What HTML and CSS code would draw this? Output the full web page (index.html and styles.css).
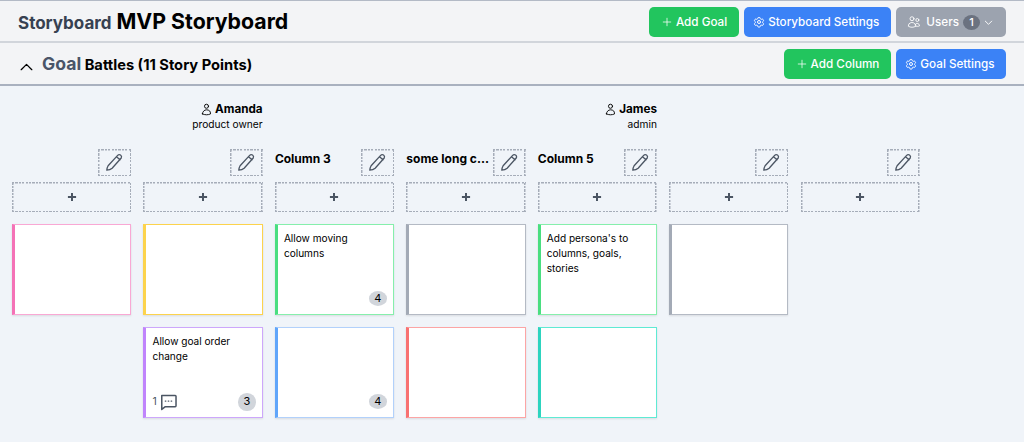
FILE: index.html
```html
<!DOCTYPE html>
<html lang="en">
<head>
    <meta charset="UTF-8">
    <meta name="viewport" content="width=device-width, initial-scale=1.0">
    <title>MVP Storyboard</title>
    <link rel="stylesheet" href="styles.css">
</head>
<body>
    <svg class="icon-sprite" width="0" height="0">
        <symbol id="i-plus" viewBox="0 0 24 24"><path d="M12 4.5v15m7.5-7.5h-15" fill="none" stroke="currentColor" stroke-width="1.5" stroke-linecap="round"/></symbol>
        <symbol id="i-cog" viewBox="0 0 24 24"><path d="M9.6 3.9c.1-.5.6-.9 1.1-.9h2.6c.5 0 1 .4 1.1.9l.2 1.4c.1.4.4.7.7.9l.6.3c.4.2.8.2 1.1.1l1.3-.5c.5-.2 1.1 0 1.4.5l1.3 2.2c.3.5.2 1.1-.3 1.4l-1.1.9c-.3.2-.4.6-.4 1v.8c0 .4.1.7.4 1l1.1.9c.5.3.6.9.3 1.4l-1.3 2.2c-.3.5-.9.7-1.4.5l-1.3-.5c-.3-.1-.7-.1-1.1.1l-.6.3c-.3.2-.6.5-.7.9l-.2 1.4c-.1.5-.6.9-1.1.9h-2.6c-.5 0-1-.4-1.1-.9l-.2-1.4c-.1-.4-.4-.7-.7-.9l-.6-.3c-.4-.2-.8-.2-1.1-.1l-1.3.5c-.5.2-1.1 0-1.4-.5l-1.3-2.2c-.3-.5-.2-1.1.3-1.4l1.1-.9c.3-.3.4-.6.4-1v-.8c0-.4-.1-.8-.4-1l-1.1-.9c-.5-.3-.6-.9-.3-1.4l1.3-2.2c.3-.5.9-.7 1.4-.5l1.3.5c.3.1.7.1 1.1-.1l.6-.3c.3-.2.6-.5.7-.9z" fill="none" stroke="currentColor" stroke-width="2"/><circle cx="12" cy="12" r="3" fill="none" stroke="currentColor" stroke-width="2"/></symbol>
        <symbol id="i-users" viewBox="0 0 24 24"><path d="M15 19.1a9.4 9.4 0 0 0 2.6.4c1.4 0 2.7-.3 3.9-.9a4.1 4.1 0 0 0-7.6-2.2M15 19.1v0c0-1.1-.3-2.2-.8-3.1m.8 3.1v.1A11.9 11.9 0 0 1 8.6 21c-2.3 0-4.5-.6-6.4-1.8v-.1a6.4 6.4 0 0 1 12-3.1M12 6.4a3.4 3.4 0 1 1-6.8 0 3.4 3.4 0 0 1 6.8 0zm8.3 2.2a2.6 2.6 0 1 1-5.2 0 2.6 2.6 0 0 1 5.2 0z" fill="none" stroke="currentColor" stroke-width="1.5" stroke-linecap="round" stroke-linejoin="round"/></symbol>
        <symbol id="i-user" viewBox="0 0 24 24"><path d="M15.75 6a3.75 3.75 0 1 1-7.5 0 3.75 3.75 0 0 1 7.5 0zM4.5 20.1a7.5 7.5 0 0 1 15 0A18 18 0 0 1 12 21.75c-2.7 0-5.2-.6-7.5-1.65z" fill="none" stroke="currentColor" stroke-width="1.7" stroke-linecap="round" stroke-linejoin="round"/></symbol>
        <symbol id="i-pencil" viewBox="0 0 24 24"><path d="M3.2 20.8c.1-1.8.6-3.6 1.5-5.1L15.6 3.9c.9-1 2.3-1.1 3.3-.4 1.1.8 1.4 2.2.8 3.3L9.3 18.6c-1.5 1.4-3.6 2.2-6.1 2.2zM14.3 5.4l4 3.5" fill="none" stroke="currentColor" stroke-width="1.5" stroke-linecap="round" stroke-linejoin="round"/></symbol>
    </svg>

    <header class="topbar">
        <h1 class="title"><span class="title-label">Storyboard</span> MVP Storyboard</h1>
        <div class="actions">
            <button class="btn btn-green"><svg class="btn-icon"><use href="#i-plus"/></svg>Add Goal</button>
            <button class="btn btn-blue btn-settings"><svg class="btn-icon"><use href="#i-cog"/></svg>Storyboard Settings</button>
            <button class="btn btn-gray"><svg class="users-icon"><use href="#i-users"/></svg>Users<span class="users-count">1</span>
                <svg class="caret" viewBox="0 0 24 24"><path d="M5 9l7 7 7-7" fill="none" stroke="currentColor" stroke-width="2" stroke-linecap="round" stroke-linejoin="round"/></svg>
            </button>
        </div>
    </header>

    <section class="goalbar">
        <div class="goal-title">
            <svg class="collapse" viewBox="0 0 24 24"><path d="M4.5 16.5l7.5-7.5 7.5 7.5" fill="none" stroke="currentColor" stroke-width="1.8" stroke-linecap="round" stroke-linejoin="round"/></svg>
            <h2 class="goal-name"><span class="goal-label">Goal</span> Battles (11 Story Points)</h2>
        </div>
        <div class="actions">
            <button class="btn btn-green"><svg class="btn-icon"><use href="#i-plus"/></svg>Add Column</button>
            <button class="btn btn-blue btn-settings"><svg class="btn-icon"><use href="#i-cog"/></svg>Goal Settings</button>
        </div>
    </section>

    <main class="board">
        <div class="column">
            <div class="persona"></div>
            <div class="column-head"><span class="column-name"></span><button class="edit"><svg><use href="#i-pencil"/></svg></button></div>
            <button class="add-story"><svg viewBox="0 0 24 24"><path d="M12 5v14M5 12h14" stroke="currentColor" stroke-width="3.4"/></svg></button>
            <div class="card card-pink"></div>
        </div>

        <div class="column">
            <div class="persona">
                <div class="persona-name"><svg class="persona-icon"><use href="#i-user"/></svg>Amanda</div>
                <div class="persona-role">product owner</div>
            </div>
            <div class="column-head"><span class="column-name"></span><button class="edit"><svg><use href="#i-pencil"/></svg></button></div>
            <button class="add-story"><svg viewBox="0 0 24 24"><path d="M12 5v14M5 12h14" stroke="currentColor" stroke-width="3.4"/></svg></button>
            <div class="card card-yellow"></div>
            <div class="card card-purple">
                <p class="card-text">Allow goal order change</p>
                <div class="comments">1
                    <svg class="comment-icon" viewBox="0 0 24 24"><path d="M3.5 4.5h17a1 1 0 0 1 1 1v12a1 1 0 0 1-1 1H8l-4.5 3.5z" fill="none" stroke="currentColor" stroke-width="1.9" stroke-linejoin="round"/><path d="M8 11.5h.6M11.7 11.5h.6M15.4 11.5h.6" stroke="currentColor" stroke-width="1.8" stroke-linecap="round"/></svg>
                </div>
                <span class="points points-round">3</span>
            </div>
        </div>

        <div class="column">
            <div class="persona"></div>
            <div class="column-head"><span class="column-name">Column 3</span><button class="edit"><svg><use href="#i-pencil"/></svg></button></div>
            <button class="add-story"><svg viewBox="0 0 24 24"><path d="M12 5v14M5 12h14" stroke="currentColor" stroke-width="3.4"/></svg></button>
            <div class="card card-green">
                <p class="card-text">Allow moving columns</p>
                <span class="points">4</span>
            </div>
            <div class="card card-blue"><span class="points">4</span></div>
        </div>

        <div class="column">
            <div class="persona"></div>
            <div class="column-head"><span class="column-name">some long c…</span><button class="edit"><svg><use href="#i-pencil"/></svg></button></div>
            <button class="add-story"><svg viewBox="0 0 24 24"><path d="M12 5v14M5 12h14" stroke="currentColor" stroke-width="3.4"/></svg></button>
            <div class="card card-gray"></div>
            <div class="card card-red"></div>
        </div>

        <div class="column">
            <div class="persona">
                <div class="persona-name"><svg class="persona-icon"><use href="#i-user"/></svg>James</div>
                <div class="persona-role">admin</div>
            </div>
            <div class="column-head"><span class="column-name">Column 5</span><button class="edit"><svg><use href="#i-pencil"/></svg></button></div>
            <button class="add-story"><svg viewBox="0 0 24 24"><path d="M12 5v14M5 12h14" stroke="currentColor" stroke-width="3.4"/></svg></button>
            <div class="card card-green">
                <p class="card-text">Add persona's to columns, goals, stories</p>
            </div>
            <div class="card card-teal"></div>
        </div>

        <div class="column">
            <div class="persona"></div>
            <div class="column-head"><span class="column-name"></span><button class="edit"><svg><use href="#i-pencil"/></svg></button></div>
            <button class="add-story"><svg viewBox="0 0 24 24"><path d="M12 5v14M5 12h14" stroke="currentColor" stroke-width="3.4"/></svg></button>
            <div class="card card-gray"></div>
        </div>

        <div class="column">
            <div class="persona"></div>
            <div class="column-head"><span class="column-name"></span><button class="edit"><svg><use href="#i-pencil"/></svg></button></div>
            <button class="add-story"><svg viewBox="0 0 24 24"><path d="M12 5v14M5 12h14" stroke="currentColor" stroke-width="3.4"/></svg></button>
        </div>
    </main>
</body>
</html>
```

FILE: styles.css
```css
* {
    box-sizing: border-box;
}
body {
    margin: 0;
    font-family: Inter, "Liberation Sans", sans-serif;
    background-color: #f0f4f9;
    color: #000;
    height: 442px;
    overflow: hidden;
}
.icon-sprite {
    position: absolute;
}
.topbar, .goalbar {
    display: flex;
    align-items: center;
    justify-content: space-between;
    background-color: #f3f4f6;
    padding-right: 18px;
}
.topbar {
    height: 43px;
    padding-left: 18px;
    padding-top: 2px;
    border-top: 1px solid #b3bac6;
    border-bottom: 2px solid #d1d5db;
}
.goalbar {
    height: 43px;
    padding-left: 18px;
    border-bottom: 2px solid #a9b1bf;
}
.title {
    margin: 0;
    font-size: 21.3px;
    font-weight: 700;
    line-height: 30px;
}
.title-label {
    font-size: 17px;
    font-weight: 700;
    color: #374151;
}
.goal-title {
    display: flex;
    align-items: center;
    gap: 7px;
    padding-top: 2px;
}
.collapse {
    width: 17px;
    height: 17px;
    margin-top: 3px;
}
.goal-name {
    margin: 0;
    font-size: 14.7px;
    font-weight: 700;
    line-height: 24px;
}
.goal-label {
    font-size: 17.6px;
    color: #4a5568;
}
.actions {
    display: flex;
    gap: 5.5px;
}
.btn {
    display: flex;
    align-items: center;
    height: 30px;
    padding: 0 11.5px;
    border: none;
    border-radius: 5px;
    font-family: inherit;
    font-size: 11.7px;
    font-weight: 500;
    color: #fff;
}
.btn-green {
    background-color: #22c55e;
}
.btn-blue {
    background-color: #3b82f6;
}
.btn-gray {
    background-color: #9ca3af;
    padding-left: 11px;
    padding-right: 12px;
}
.btn-settings {
    padding-left: 9px;
}
.btn-icon {
    width: 12px;
    height: 12px;
    margin-right: 3px;
}
.users-icon {
    width: 14px;
    height: 14px;
    margin-right: 5px;
}
.users-count {
    width: 17px;
    height: 15px;
    margin-left: 4px;
    border-radius: 50%;
    background-color: #6b7280;
    font-size: 11px;
    line-height: 15px;
    text-align: center;
}
.caret {
    width: 11px;
    height: 11px;
    margin-left: 3px;
}
.board {
    display: flex;
    gap: 12.25px;
    padding: 15px 12px 0;
}
.column {
    display: flex;
    flex-direction: column;
    width: 119.2px;
}
.persona {
    height: 48px;
    text-align: right;
}
.persona-name {
    display: flex;
    align-items: center;
    justify-content: flex-end;
    font-size: 11.7px;
    font-weight: 700;
    line-height: 16px;
}
.persona-icon {
    width: 13px;
    height: 13px;
    margin-right: 2px;
}
.persona-role {
    font-size: 10.2px;
    line-height: 15px;
}
.column-head {
    display: flex;
    align-items: flex-start;
    justify-content: space-between;
    height: 33px;
}
.column-name {
    flex: 1;
    min-width: 0;
    white-space: nowrap;
    font-size: 12px;
    font-weight: 700;
    line-height: 20px;
}
/* dashes finer than a 2px dashed border gives */
.edit, .add-story {
    display: flex;
    align-items: center;
    justify-content: center;
    padding: 0;
    border: none;
    color: #4b5563;
    background-color: transparent;
    background-image:
        repeating-linear-gradient(90deg, #a6adb9 0 2.2px, transparent 2.2px 3.4px),
        repeating-linear-gradient(90deg, #a6adb9 0 2.2px, transparent 2.2px 3.4px),
        repeating-linear-gradient(0deg, #a6adb9 0 2.2px, transparent 2.2px 3.4px),
        repeating-linear-gradient(0deg, #a6adb9 0 2.2px, transparent 2.2px 3.4px);
    background-size: 100% 1.5px, 100% 1.5px, 1.5px 100%, 1.5px 100%;
    background-position: 0 0, 0 100%, 0 0, 100% 0;
    background-repeat: no-repeat;
}
.edit {
    flex: none;
    width: 33px;
    height: 27px;
}
.edit svg {
    width: 21px;
    height: 21px;
}
.add-story {
    height: 30px;
    margin-bottom: 12px;
}
.add-story svg {
    width: 14px;
    height: 14px;
}
.card {
    position: relative;
    height: 91px;
    margin-bottom: 12px;
    padding: 6px 8px 8px 6px;
    background-color: #fff;
    border: 1px solid;
    border-left-width: 3px;
    box-shadow: 0 1px 2px rgba(0, 0, 0, 0.1);
}
.card-pink {
    border-color: #f9a8d4;
    border-left-color: #f472b6;
}
.card-yellow {
    border-color: #fcd34d;
    border-left-color: #fcd34d;
}
.card-green {
    border-color: #86efac;
    border-left-color: #4ade80;
}
.card-gray {
    border-color: #b4bac4;
    border-left-color: #a3aab6;
}
.card-purple {
    border-color: #cda7fb;
    border-left-color: #c084fc;
}
.card-blue {
    border-color: #b2d1fb;
    border-left-color: #60a5fa;
}
.card-red {
    border-color: #fca5a5;
    border-left-color: #f87171;
}
.card-teal {
    border-color: #5eead4;
    border-left-color: #2dd4bf;
}
.card-text {
    margin: 0;
    font-size: 10.1px;
    line-height: 15px;
}
.points {
    position: absolute;
    right: 6px;
    bottom: 8px;
    width: 18.5px;
    height: 15px;
    border-radius: 50%;
    background-color: #d1d5db;
    font-size: 11px;
    line-height: 15px;
    text-align: center;
}
.points-round {
    width: 17.5px;
    height: 17.5px;
    bottom: 6.5px;
    line-height: 17.5px;
}
.comments {
    position: absolute;
    left: 6px;
    bottom: 6px;
    display: flex;
    align-items: center;
    gap: 2px;
    font-size: 10.5px;
    color: #4b5563;
}
.comment-icon {
    width: 19px;
    height: 19px;
    color: #4b5563;
}
```
